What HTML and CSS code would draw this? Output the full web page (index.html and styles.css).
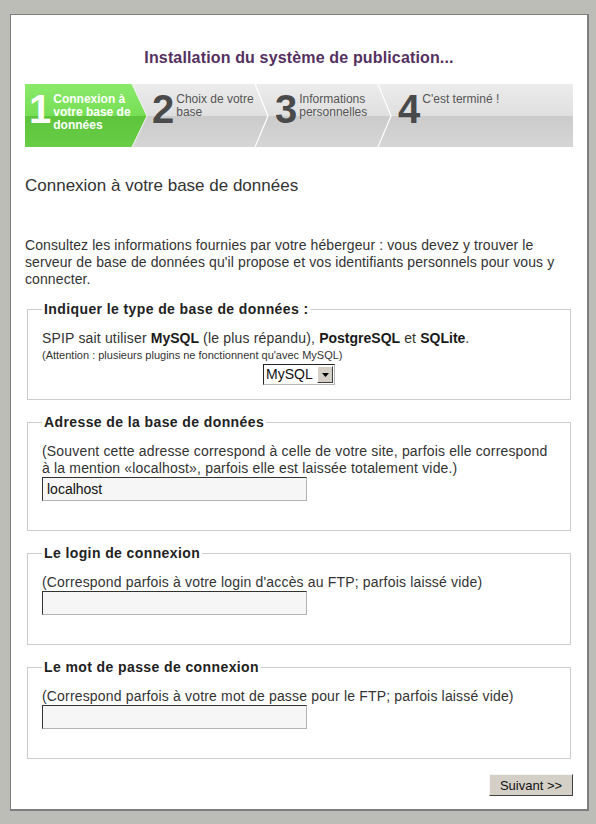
FILE: index.html
```html
<!DOCTYPE html>
<html lang="fr">
<head>
<meta charset="utf-8">
<title>Installation SPIP</title>
<link rel="stylesheet" href="styles.css">
</head>
<body>
<div class="page">
  <h1 class="title">Installation du système de publication...</h1>

  <div class="steps">
    <svg class="steps-bg" width="548" height="63" viewBox="0 0 548 63" preserveAspectRatio="none" aria-hidden="true">
      <defs>
        <linearGradient id="gt" x1="0" y1="0" x2="0" y2="1"><stop offset="0" stop-color="#ececec"/><stop offset="1" stop-color="#dfdfdf"/></linearGradient>
        <linearGradient id="gb" x1="0" y1="0" x2="0" y2="1"><stop offset="0" stop-color="#cbcbcb"/><stop offset="1" stop-color="#d6d6d6"/></linearGradient>
        <linearGradient id="ggt" x1="0" y1="0" x2="0" y2="1"><stop offset="0" stop-color="#8aea6a"/><stop offset="1" stop-color="#76de55"/></linearGradient>
        <linearGradient id="ggb" x1="0" y1="0" x2="0" y2="1"><stop offset="0" stop-color="#5dc43b"/><stop offset="1" stop-color="#68cd47"/></linearGradient>
      </defs>
      <rect x="0" y="0" width="548" height="32" fill="url(#gt)"/>
      <rect x="0" y="32" width="548" height="31" fill="url(#gb)"/>
      <polygon points="0,0 107,0 122,32 0,32" fill="url(#ggt)"/>
      <polygon points="0,32 122,32 107,63 0,63" fill="url(#ggb)"/>
      <polyline points="107,0 122,32 107,63" fill="none" stroke="#f4f4f4" stroke-width="1"/>
      <polyline points="230,0 243,32 230,63" fill="none" stroke="#ffffff" stroke-width="1.2"/>
      <polyline points="353,0 366,32 353,63" fill="none" stroke="#ffffff" stroke-width="1.2"/>
    </svg>
    <ol class="steps-list">
      <li class="step active"><span class="num">1</span><span class="label">Connexion à votre base de données</span></li>
      <li class="step"><span class="num">2</span><span class="label">Choix de votre base</span></li>
      <li class="step"><span class="num">3</span><span class="label">Informations personnelles</span></li>
      <li class="step last"><span class="num">4</span><span class="label">C'est terminé !</span></li>
    </ol>
  </div>

  <h2 class="heading">Connexion à votre base de données</h2>

  <p class="intro">Consultez les informations fournies par votre hébergeur : vous devez y trouver le serveur de base de données qu'il propose et vos identifiants personnels pour vous y connecter.</p>

  <form class="form">
    <fieldset class="box">
      <legend>Indiquer le type de base de données :</legend>
      <p class="line">SPIP sait utiliser <b>MySQL</b> (le plus répandu), <b>PostgreSQL</b> et <b>SQLite</b>.</p>
      <p class="note">(Attention : plusieurs plugins ne fonctionnent qu'avec MySQL)</p>
      <div class="select-row">
        <span class="select"><span class="select-value">MySQL</span><span class="select-btn"><svg width="7" height="4" viewBox="0 0 7 4"><polygon points="0,0 7,0 3.5,4" fill="#000"/></svg></span></span>
      </div>
    </fieldset>

    <fieldset class="box">
      <legend>Adresse de la base de données</legend>
      <p class="line">(Souvent cette adresse correspond à celle de votre site, parfois elle correspond à la mention «localhost», parfois elle est laissée totalement vide.)</p>
      <input class="field" type="text" value="localhost">
    </fieldset>

    <fieldset class="box">
      <legend>Le login de connexion</legend>
      <p class="line">(Correspond parfois à votre login d'accès au FTP; parfois laissé vide)</p>
      <input class="field" type="text" value="">
    </fieldset>

    <fieldset class="box">
      <legend>Le mot de passe de connexion</legend>
      <p class="line">(Correspond parfois à votre mot de passe pour le FTP; parfois laissé vide)</p>
      <input class="field" type="password" value="">
    </fieldset>

    <div class="actions"><button class="btn" type="button">Suivant &gt;&gt;</button></div>
  </form>
</div>
</body>
</html>
```
FILE: styles.css
```css
html, body {
  margin: 0;
  padding: 0;
}
body {
  background: #bcbdb7;
  font-family: "Liberation Sans", Arial, sans-serif;
  color: #333;
}
.page {
  margin: 14px 7px 0 10px;
  background: #fff;
  border: 1px solid #7e7e7e;
  border-right-width: 2px;
  border-bottom-width: 2px;
  padding: 0 14px 13px 14px;
}
.title {
  margin: 0;
  padding-top: 33px;
  font-size: 16px;
  line-height: 19px;
  font-weight: bold;
  letter-spacing: 0.15px;
  color: #55305f;
  text-align: center;
}
.steps {
  margin-top: 17px;
  display: grid;
  height: 63px;
}
.steps > * {
  grid-area: 1 / 1;
}
.steps-bg {
  display: block;
  width: 100%;
  height: 63px;
}
.steps-list {
  list-style: none;
  margin: 0;
  padding: 0;
  display: flex;
}
.step {
  width: 123px;
  box-sizing: border-box;
  padding-left: 4px;
  display: flex;
  align-items: flex-start;
}
.step.last {
  flex: 1;
}
.num {
  font-size: 40px;
  line-height: 40px;
  font-weight: bold;
  margin-top: 5px;
  color: #4a4a4a;
}
.label {
  font-size: 12px;
  line-height: 13px;
  padding-top: 9px;
  margin-left: 2px;
  max-width: 82px;
  color: #555;
}
.active .num,
.active .label {
  color: #fff;
}
.active .label {
  font-weight: bold;
}
.heading {
  margin: 29px 0 0;
  font-size: 17px;
  line-height: 20px;
  font-weight: normal;
  color: #333;
}
.intro {
  margin: 41px 0 0;
  font-size: 14px;
  line-height: 17px;
  letter-spacing: 0.1px;
}
.form {
  margin: 0;
}
.box {
  margin: 14px 2px 0;
  padding: 13px 14px 14px;
  border: 1px solid #cccccc;
}
.box:first-child {
  margin-top: 13px;
}
.box legend {
  padding: 0 2px;
  font-size: 14px;
  line-height: 16px;
  font-weight: bold;
  letter-spacing: 0.4px;
  color: #222;
}
.line {
  margin: 0;
  font-size: 14px;
  line-height: 17px;
  letter-spacing: 0.17px;
}
.line b {
  color: #1a1a1a;
  letter-spacing: 0;
}
.note {
  margin: 2px 0 0;
  font-size: 11px;
  line-height: 12px;
}
.select-row {
  margin-top: 3px;
  text-align: center;
}
.select {
  display: inline-flex;
  align-items: center;
  height: 21px;
  box-sizing: border-box;
  border: 1px solid #222;
  border-right-color: #b8b8b8;
  border-bottom-color: #b8b8b8;
  background: #fff;
  vertical-align: top;
}
.select-value {
  width: 50px;
  padding-left: 2px;
  font-size: 14px;
  line-height: 17px;
  color: #111;
  text-align: left;
}
.select-btn {
  width: 16px;
  height: 17px;
  box-sizing: border-box;
  margin: 0 1px;
  background: #d4d0c8;
  border: 1px solid #fff;
  border-right-color: #404040;
  border-bottom-color: #404040;
  display: flex;
  align-items: center;
  justify-content: center;
}
.select-btn svg {
  display: block;
}
.field {
  display: block;
  box-sizing: border-box;
  width: 265px;
  height: 24px;
  margin: 0 0 15px;
  padding: 0 4px;
  background: #f6f6f6;
  border: 1px solid #b4b4b4;
  border-top-color: #333;
  border-left-color: #333;
  font-family: "Liberation Sans", Arial, sans-serif;
  font-size: 14px;
  color: #111;
  outline: none;
}
.actions {
  margin-top: 15px;
  display: flex;
  justify-content: flex-end;
}
.btn {
  width: 84px;
  height: 22px;
  padding: 0;
  background: #d4d0c8;
  border: 1px solid #f4f4f4;
  border-right-color: #404040;
  border-bottom-color: #404040;
  font-family: "Liberation Sans", Arial, sans-serif;
  font-size: 13px;
  color: #111;
}
```
